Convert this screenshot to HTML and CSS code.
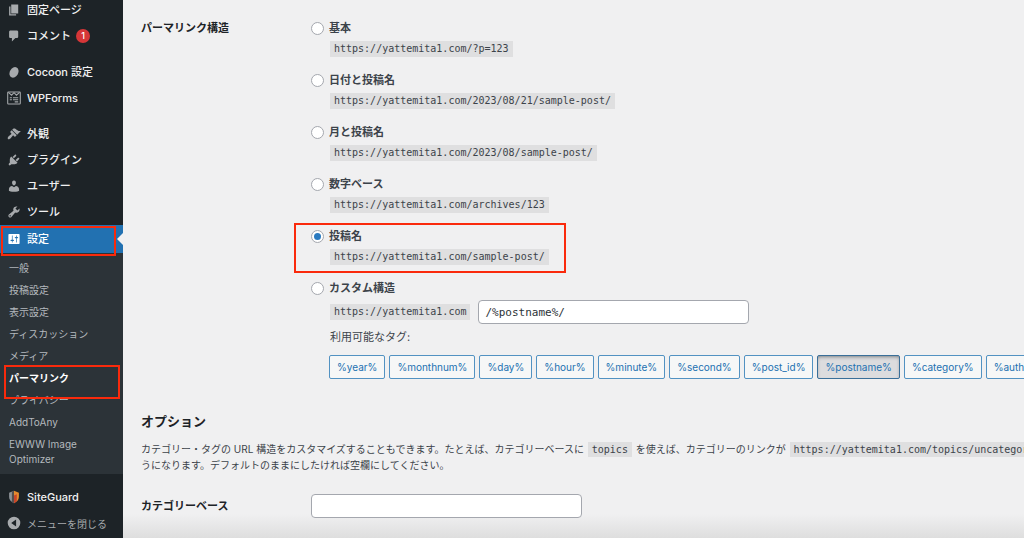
FILE: index.html
```html
<!DOCTYPE html>
<html lang="ja">
<head>
<meta charset="utf-8">
<title>パーマリンク設定</title>
<link rel="stylesheet" href="styles.css">
</head>
<body>
<div class="layout">
  <nav class="sidebar" aria-label="メインメニュー">
    <ul class="menu">
      <li><a class="item" href="#"><svg class="icon" viewBox="0 0 20 20"><path d="M6 15V2h10v13H6zm-1 1h8v2H3V5h2v11z"/></svg>固定ページ</a></li>
      <li><a class="item" href="#"><svg class="icon" viewBox="0 0 20 20"><path d="M5 2h9c1.1 0 2 .9 2 2v7c0 1.1-.9 2-2 2h-2l-5 5v-5H5c-1.1 0-2-.9-2-2V4c0-1.1.9-2 2-2z"/></svg>コメント<span class="badge">1</span></a></li>
      <li class="separator"></li>
      <li><a class="item" href="#"><svg class="icon" viewBox="0 0 20 20"><ellipse cx="10" cy="10.5" rx="6" ry="8" transform="rotate(28 10 10.5)"/></svg>Cocoon 設定</a></li>
      <li><a class="item" href="#"><svg class="icon" viewBox="0 0 20 20"><g fill="none" stroke="currentColor" stroke-width="1.5"><rect x="1" y="1.500" width="18" height="17" rx="1"/><path d="M2 2l4.500 4L10 2.500 13.500 6 18 2M4 9.500h3M8.500 9.500H16M4 12.500h3M8.500 12.500H16M11 15.500h5"/></g></svg>WPForms</a></li>
      <li class="separator"></li>
      <li><a class="item" href="#"><svg class="icon" viewBox="0 0 20 20"><path d="M14.480 11.060L7.410 3.990l1.500-1.500c.5-.56 2.300-.47 3.510.32 1.210.8 1.430 1.280 2.910 2.100 1.180.64 2.450 1.260 4.450.85zm-.71.71L6.700 4.700 4.930 6.470c-.39.39-.39 1.020 0 1.410l1.060 1.060c.39.39.39 1.030 0 1.420-.6.6-1.430 1.110-2.210 1.690-.35.26-.7.53-1.010.84C1.430 14.230.4 16.080 1.400 17.070c.99 1 2.840-.03 4.180-1.360.31-.31.58-.66.85-1.020.57-.78 1.080-1.610 1.690-2.210.39-.39 1.020-.39 1.410 0l1.060 1.060c.39.39 1.020.39 1.410 0z"/></svg>外観</a></li>
      <li><a class="item" href="#"><svg class="icon" viewBox="0 0 20 20"><path d="M13.110 4.360L9.870 7.600 8 5.730l3.240-3.240c.35-.34 1.050-.2 1.560.32.52.51.66 1.210.31 1.550zm-8 1.770l.91-1.120 9.010 9.010-1.190.84c-.71.71-2.630 1.160-3.820 1.160H6.140L4.900 17.260c-.59.59-1.540.59-2.120 0-.59-.58-.59-1.530 0-2.120l1.240-1.240v-3.880c0-1.130.4-3.190 1.090-3.890zm7.260 3.970l3.240-3.240c.34-.35 1.040-.21 1.550.31.52.51.66 1.210.31 1.550l-3.240 3.250z"/></svg>プラグイン</a></li>
      <li><a class="item" href="#"><svg class="icon" viewBox="0 0 20 20"><path d="M10 9.250c-2.270 0-2.730-3.440-2.730-3.440C7 4.020 7.820 2 9.970 2c2.160 0 2.980 2.020 2.710 3.810 0 0-.41 3.440-2.680 3.440zm0 2.570L12.720 10c2.390 0 4.520 2.330 4.520 4.530v2.490s-3.650 1.130-7.240 1.130c-3.650 0-7.240-1.130-7.240-1.130v-2.490c0-2.250 1.940-4.480 4.470-4.480z"/></svg>ユーザー</a></li>
      <li><a class="item" href="#"><svg class="icon" viewBox="0 0 20 20"><path d="M16.680 9.770c-1.340 1.340-3.300 1.670-4.950.99l-5.410 6.520c-.99.99-2.590.99-3.580 0s-.99-2.590 0-3.570l6.520-5.420c-.68-1.650-.35-3.610.99-4.950 1.280-1.280 3.120-1.620 4.720-1.060l-2.890 2.890 2.820 2.820 2.860-2.870c.53 1.580.18 3.390-1.080 4.650zM3.810 16.210c.4.39 1.040.39 1.430 0 .4-.4.4-1.040 0-1.430-.39-.4-1.030-.4-1.430 0-.39.39-.39 1.030 0 1.430z"/></svg>ツール</a></li>
      <li class="open">
        <a class="item current" href="#"><svg class="icon" viewBox="0 0 20 20"><path d="M18 16V4c0-.55-.45-1-1-1H3c-.55 0-1 .45-1 1v12c0 .55.45 1 1 1h14c.55 0 1-.45 1-1zM8 11h1c.55 0 1 .45 1 1s-.45 1-1 1H8v1.500c0 .28-.22.5-.5.5s-.5-.22-.5-.5V13H6c-.55 0-1-.45-1-1s.45-1 1-1h1V5.500c0-.28.22-.5.5-.5s.5.22.5.5V11zm5-2h-1c-.55 0-1-.45-1-1s.45-1 1-1h1V5.500c0-.28.22-.5.5-.5s.5.22.5.5V7h1c.55 0 1 .45 1 1s-.45 1-1 1h-1v5.500c0 .28-.22.5-.5.5s-.5-.22-.5-.5V9z"/></svg>設定</a>
        <ul class="submenu">
          <li><a href="#">一般</a></li>
          <li><a href="#">投稿設定</a></li>
          <li><a href="#">表示設定</a></li>
          <li><a href="#">ディスカッション</a></li>
          <li><a href="#">メディア</a></li>
          <li class="selected"><a href="#" aria-current="page">パーマリンク</a></li>
          <li><a href="#">プライバシー</a></li>
          <li><a href="#">AddToAny</a></li>
          <li><a href="#">EWWW Image Optimizer</a></li>
        </ul>
      </li>
      <li class="separator"></li>
      <li><a class="item" href="#"><svg class="icon" viewBox="0 0 20 20"><path fill="#8d9297" d="M3 4l7-3v18c-4-2-7-5-7-9z"/><path fill="#e58a2e" d="M10 1l7 3v6c0 4-3 7-7 9z"/><path fill="#c8452c" d="M10 8l4-2v10l-4 3z"/><path fill="#55504e" d="M7 2.300L10 1v18l-3-2z"/></svg>SiteGuard</a></li>
      <li><button class="item collapse" type="button"><svg class="icon" viewBox="0 0 20 20"><path fill-rule="evenodd" d="M10 1a9 9 0 1 1 0 18 9 9 0 0 1 0-18zm3 4l-7 5 7 5z"/></svg>メニューを閉じる</button></li>
    </ul>
  </nav>

  <main class="content">
    <section class="form-row">
      <h2 class="row-title" id="structure">パーマリンク構造</h2>
      <div class="options" role="radiogroup" aria-labelledby="structure">
        <div class="option"><input type="radio" name="s" id="s1"><label for="s1">基本</label><code>https://yattemita1.com/?p=123</code></div>
        <div class="option"><input type="radio" name="s" id="s2"><label for="s2">日付と投稿名</label><code>https://yattemita1.com/2023/08/21/sample-post/</code></div>
        <div class="option"><input type="radio" name="s" id="s3"><label for="s3">月と投稿名</label><code>https://yattemita1.com/2023/08/sample-post/</code></div>
        <div class="option"><input type="radio" name="s" id="s4"><label for="s4">数字ベース</label><code>https://yattemita1.com/archives/123</code></div>
        <div class="option marked"><input type="radio" name="s" id="s5" checked><label for="s5">投稿名</label><code>https://yattemita1.com/sample-post/</code></div>
        <div class="option custom">
          <input type="radio" name="s" id="s6"><label for="s6">カスタム構造</label>
          <div class="custom-row"><code>https://yattemita1.com</code><input class="text mono" type="text" value="/%postname%/" aria-label="カスタム構造"></div>
          <p class="tags-title">利用可能なタグ:</p>
          <div class="tags">
            <button type="button">%year%</button>
            <button type="button">%monthnum%</button>
            <button type="button">%day%</button>
            <button type="button">%hour%</button>
            <button type="button">%minute%</button>
            <button type="button">%second%</button>
            <button type="button">%post_id%</button>
            <button type="button" class="active" aria-pressed="true">%postname%</button>
            <button type="button">%category%</button>
            <button type="button">%author%</button>
          </div>
        </div>
      </div>
    </section>

    <h2 class="section-title">オプション</h2>
    <p class="description">カテゴリー・タグの URL 構造をカスタマイズすることもできます。たとえば、カテゴリーベースに <code>topics</code> を使えば、カテゴリーのリンクが <code>https://yattemita1.com/topics/uncategorized/</code> のよ<br>うになります。デフォルトのままにしたければ空欄にしてください。</p>

    <section class="form-row base-row">
      <label class="row-title" for="base">カテゴリーベース</label>
      <input class="text" id="base" type="text">
    </section>
  </main>
</div>
</body>
</html>
```
FILE: styles.css
```css
*, *::before, *::after { box-sizing: border-box; }

body {
  margin: 0;
  font-family: Inter, "Noto Sans CJK JP", sans-serif;
  font-size: 11px;
  line-height: 16px;
  color: #3c434a;
  background: #f0f0f1;
}

ul { margin: 0; padding: 0; list-style: none; }
h2, p { margin: 0; }
a { text-decoration: none; }

.layout {
  display: flex;
  height: 100vh;
  overflow: hidden;
}

/* Sidebar */
.sidebar {
  flex: none;
  width: 123px;
  background: #1d2327;
}

.menu { margin-top: -3px; }
.separator { height: 10px; }

.item {
  display: flex;
  align-items: center;
  width: 100%;
  height: 26px;
  padding: 0 0 0 7px;
  color: #f0f0f1;
  font-family: inherit;
  font-size: 11px;
  font-weight: 500;
  white-space: nowrap;
}

.icon {
  flex: none;
  width: 14px;
  height: 14px;
  margin-right: 6px;
  color: #a7aaad;
  fill: currentColor;
}

.badge {
  width: 14px;
  height: 14px;
  margin-left: 5px;
  border-radius: 7px;
  background: #d63638;
  color: #fff;
  font-size: 9px;
  line-height: 14px;
  text-align: center;
}

.open, .selected, .marked { position: relative; }

.item.current {
  position: relative;
  height: 28px;
  background: #2271b1;
  color: #fff;
}
.current .icon { color: #fff; }
.current::after {
  content: "";
  position: absolute;
  top: 8px;
  right: 0;
  border: 6px solid transparent;
  border-left: 0;
  border-right-color: #f0f0f1;
}

/* Red highlight frames */
.open::before, .selected::after, .marked::after {
  content: "";
  position: absolute;
  z-index: 2;
  border: 2px solid #fa2a0c;
  pointer-events: none;
}
.open::before { top: 1px; left: 1px; width: 115px; height: 30px; }
.selected::after { top: -3px; left: 4px; width: 116px; height: 34px; }
.marked::after { top: -5px; left: -17px; width: 272px; height: 50px; }

.submenu {
  padding: 5px 0 3px;
  background: #2c3338;
  font-size: 10px;
}
.submenu a {
  display: block;
  padding: 3px 24px 4px 9px;
  color: #b4b9be;
  line-height: 15px;
}
.submenu .selected a { color: #fff; font-weight: 700; }

.item.collapse {
  border: 0;
  background: none;
  color: #a7aaad;
  font-size: 10px;
  font-weight: 400;
}

/* Content */
.content {
  flex: 1;
  min-width: 0;
  padding: 20px 0 0 18px;
  overflow: hidden;
  background: linear-gradient(to top, #dedede, #f0f0f1 24px);
}

.form-row {
  display: grid;
  grid-template-columns: 170px minmax(0, 1fr);
}

.row-title {
  color: #1d2327;
  font-size: 11px;
  font-weight: 700;
}

.option {
  display: grid;
  grid-template-columns: 13px minmax(0, 1fr);
  column-gap: 5px;
  row-gap: 5px;
  align-items: center;
  justify-items: start;
  margin-bottom: 15px;
}
.option label { font-weight: 700; }
.option > code { grid-column: 2; }

input[type="radio"] {
  appearance: none;
  display: grid;
  place-items: center;
  width: 13px;
  height: 13px;
  margin: 0;
  border: 1px solid #a4a7ae;
  border-radius: 50%;
  background: #fff;
}
input[type="radio"]:checked::before {
  content: "";
  width: 7px;
  height: 7px;
  border-radius: 50%;
  background: #2a7ac0;
}

code {
  padding: 0 4px;
  background: #dfdfe0;
  font-family: "DejaVu Sans Mono", monospace;
  font-size: 10px;
  line-height: 16px;
}
.option code { margin-left: 1px; }

.text {
  width: 271px;
  height: 24px;
  padding: 0 6px;
  border: 1px solid #a4a7ae;
  border-radius: 4px;
  background: #fff;
  color: #2c3338;
}
.mono {
  font-family: "DejaVu Sans Mono", monospace;
  font-size: 11px;
}

.custom { margin-bottom: 0; row-gap: 4px; }
.custom-row, .tags-title, .tags { grid-column: 2; }
.custom-row { display: flex; align-items: center; gap: 8px; }
.tags-title { padding-left: 1px; line-height: 18px; }

.tags {
  display: flex;
  gap: 4px;
  margin-top: 5px;
}
.tags button {
  flex: none;
  height: 24px;
  padding: 0 7px;
  border: 1px solid #5292c2;
  border-radius: 2px;
  background: #f6f7f7;
  color: #2271b1;
  font-family: inherit;
  font-size: 10px;
}
.tags .active {
  border-color: #3a6f99;
  background: #dcdcde;
  box-shadow: inset 0 2px 4px -2px #50575e;
}

.section-title {
  margin-top: 32px;
  color: #1d2327;
  font-size: 13px;
  line-height: 20px;
}

.description {
  margin-top: 10px;
  font-size: 10px;
  line-height: 16px;
  white-space: nowrap;
}
.description code { margin: 0 1px; padding: 2px 4px; line-height: 12px; }

.base-row { align-items: center; margin-top: 21px; }
```
